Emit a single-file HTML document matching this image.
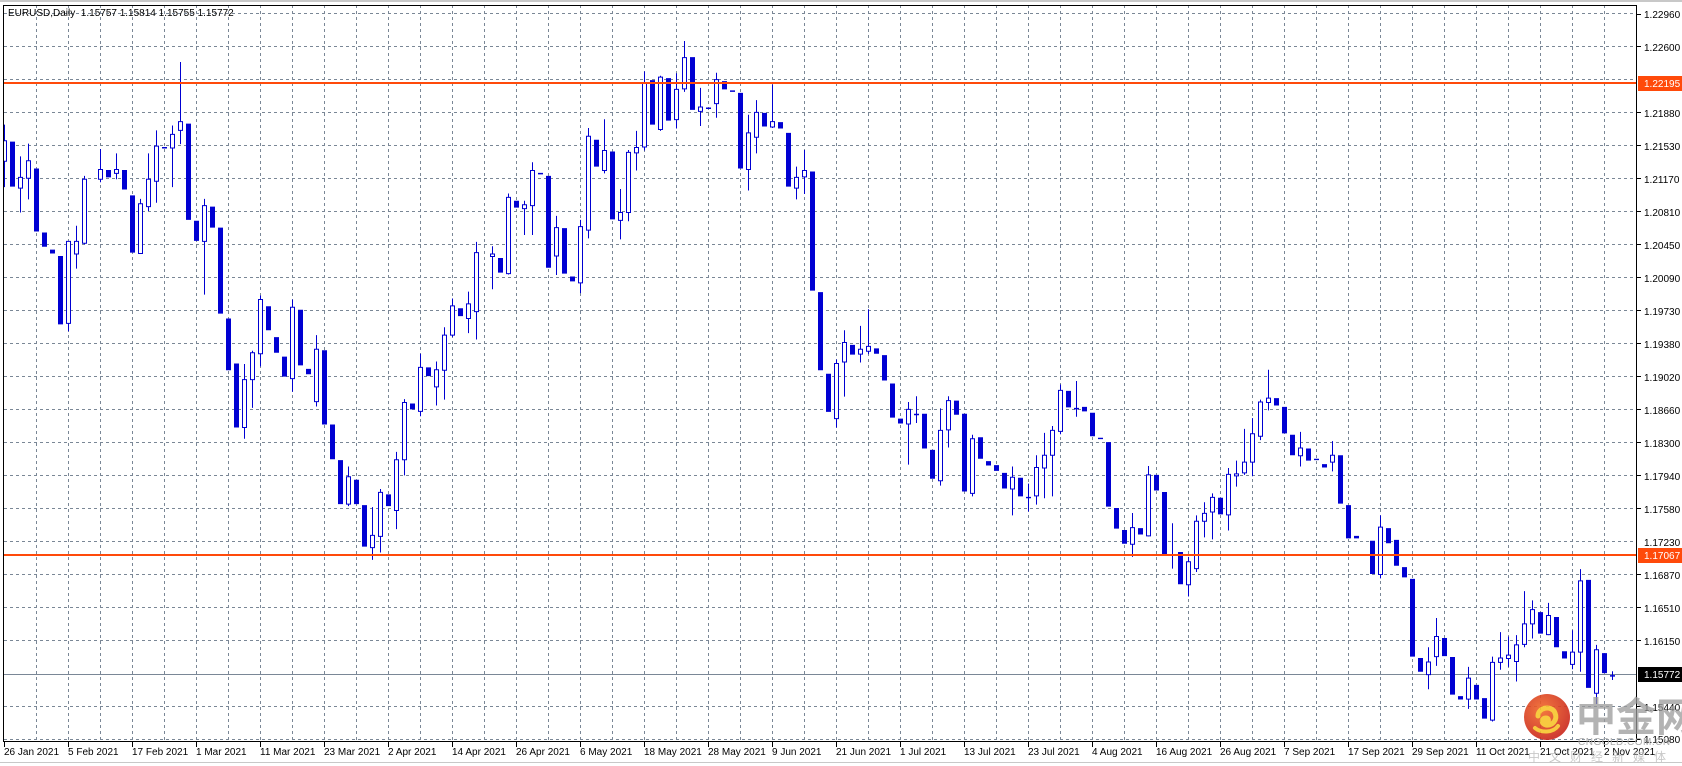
<!DOCTYPE html>
<html><head><meta charset="utf-8"><style>
html,body{margin:0;padding:0;background:#fff;}
body{width:1682px;height:766px;overflow:hidden;position:relative;}
svg{position:absolute;left:0;top:0;}
text{font-family:"Liberation Sans",Tahoma,sans-serif;font-size:10px;fill:#000;}
.wk{fill:none;stroke:#0000d2;stroke-width:1;vector-effect:non-scaling-stroke;}
.br{fill:#0000d2;}
.hl{fill:#fff;stroke:#0000d2;stroke-width:1;vector-effect:non-scaling-stroke;}
</style></head><body>
<svg width="1682" height="766" viewBox="0 0 1682 766">
<defs><clipPath id="cp"><rect x="4" y="5" width="1632" height="736"/></clipPath>
<radialGradient id="lg" cx="40%" cy="35%" r="70%"><stop offset="0" stop-color="#f26a2a"/><stop offset="1" stop-color="#c8231b"/></radialGradient></defs>
<rect x="0" y="0" width="1682" height="2" fill="#c8c8c8"/>
<path fill="none" stroke="#7a8796" stroke-width="1" stroke-dasharray="3,3" d="M36.5 5V741M68.5 5V741M100.5 5V741M132.5 5V741M164.5 5V741M196.5 5V741M228.5 5V741M260.5 5V741M292.5 5V741M324.5 5V741M356.5 5V741M388.5 5V741M420.5 5V741M452.5 5V741M484.5 5V741M516.5 5V741M548.5 5V741M580.5 5V741M612.5 5V741M644.5 5V741M676.5 5V741M708.5 5V741M740.5 5V741M772.5 5V741M804.5 5V741M836.5 5V741M868.5 5V741M900.5 5V741M932.5 5V741M964.5 5V741M996.5 5V741M1028.5 5V741M1060.5 5V741M1092.5 5V741M1124.5 5V741M1156.5 5V741M1188.5 5V741M1220.5 5V741M1252.5 5V741M1284.5 5V741M1316.5 5V741M1348.5 5V741M1380.5 5V741M1412.5 5V741M1444.5 5V741M1476.5 5V741M1508.5 5V741M1540.5 5V741M1572.5 5V741M1604.5 5V741"/>
<path fill="none" stroke="#7a8796" stroke-width="1" stroke-dasharray="3,3" d="M4 13.5H1636M4 46.5H1636M4 79.5H1636M4 112.5H1636M4 145.5H1636M4 178.5H1636M4 211.5H1636M4 244.5H1636M4 277.5H1636M4 310.5H1636M4 343.5H1636M4 376.5H1636M4 409.5H1636M4 442.5H1636M4 475.5H1636M4 508.5H1636M4 541.5H1636M4 574.5H1636M4 607.5H1636M4 640.5H1636M4 706.5H1636M4 739.5H1636"/>
<path d="M4 674.5H1636" stroke="#7a8796" stroke-width="1"/>
<g clip-path="url(#cp)"><g transform="scale(1,0.48852)">
<path class="wk" d="M4.5 255V383M20.5 320V435M28.5 294V408M68.5 494V678M76.5 462V550M84.5 360V500M100.5 305V373M116.5 314V367M140.5 407V519M148.5 314V432M156.5 267V415M172.5 257V383M180.5 127V295M204.5 407V603M244.5 745V898M252.5 718V835M260.5 605V750M292.5 613V802M316.5 686V832M348.5 955V1036M372.5 1038V1146M380.5 1001V1131M396.5 925V1083M404.5 817V973M420.5 724V852M436.5 740V830M444.5 670V818M452.5 611V690M468.5 597V682M476.5 495V695M492.5 504V592M508.5 396V562M524.5 411V481M532.5 332V481M556.5 442V563M580.5 450V600M588.5 262V488M604.5 244V355M620.5 387V490M628.5 307V453M636.5 268V349M644.5 146V308M660.5 155V268M676.5 150V263M684.5 84V188M700.5 180V258M716.5 149V241M748.5 235V390M756.5 205V314M772.5 173V262M796.5 341V408M804.5 307V397M836.5 736V875M844.5 676V812M860.5 667V742M868.5 633V725M908.5 823V951M916.5 811V866M940.5 836V994M948.5 811V916M972.5 890V1016M1012.5 955V1055M1028.5 990V1047M1036.5 932V1033M1044.5 886V1020M1052.5 872V1016M1060.5 787V889M1076.5 780V853M1132.5 1050V1140M1148.5 954V1098M1172.5 1071V1164M1188.5 1140V1221M1196.5 1055V1171M1204.5 1028V1100M1212.5 1010V1104M1228.5 958V1086M1236.5 943V996M1244.5 878V972M1252.5 856V975M1260.5 818V901M1268.5 757V840M1300.5 884V955M1332.5 903V965M1380.5 1055V1184M1428.5 1325V1411M1436.5 1265V1363M1468.5 1365V1451M1492.5 1344V1477M1500.5 1294V1371M1508.5 1303V1365M1516.5 1300V1395M1524.5 1210V1325M1532.5 1229V1307M1548.5 1234V1300M1572.5 1290V1370M1580.5 1165V1375M1596.5 1320V1441M1612.5 1374V1392"/>
<path class="br" d="M10 290h5V382h-5zM34 345h5V474h-5zM42 476h5V505h-5zM50 511h5V519h-5zM58 524h5V664h-5zM106 348h5V363h-5zM122 348h5V388h-5zM130 400h5V517h-5zM186 253h5V450h-5zM194 452h5V493h-5zM210 423h5V466h-5zM218 466h5V642h-5zM226 652h5V758h-5zM234 744h5V875h-5zM266 627h5V676h-5zM274 690h5V722h-5zM282 730h5V771h-5zM298 634h5V748h-5zM306 755h5V766h-5zM322 717h5V869h-5zM330 869h5V940h-5zM338 942h5V1032h-5zM354 982h5V1032h-5zM362 1034h5V1119h-5zM386 1012h5V1036h-5zM410 826h5V838h-5zM426 752h5V770h-5zM458 631h5V647h-5zM498 528h5V558h-5zM514 411h5V425h-5zM546 360h5V548h-5zM562 467h5V560h-5zM570 566h5V576h-5zM594 286h5V341h-5zM610 310h5V449h-5zM650 164h5V255h-5zM666 160h5V247h-5zM690 117h5V225h-5zM722 166h5V183h-5zM738 190h5V345h-5zM762 231h5V259h-5zM778 250h5V263h-5zM786 272h5V382h-5zM810 351h5V595h-5zM818 598h5V758h-5zM826 765h5V843h-5zM850 706h5V726h-5zM874 713h5V724h-5zM882 727h5V779h-5zM890 785h5V855h-5zM898 857h5V867h-5zM922 847h5V918h-5zM930 921h5V980h-5zM954 820h5V849h-5zM962 847h5V1006h-5zM978 895h5V939h-5zM986 944h5V953h-5zM994 952h5V964h-5zM1002 968h5V1000h-5zM1018 978h5V1016h-5zM1066 800h5V834h-5zM1082 833h5V842h-5zM1090 845h5V893h-5zM1106 905h5V1037h-5zM1114 1040h5V1082h-5zM1122 1085h5V1113h-5zM1138 1081h5V1094h-5zM1154 972h5V1004h-5zM1162 1007h5V1134h-5zM1178 1130h5V1196h-5zM1218 1019h5V1053h-5zM1274 815h5V830h-5zM1282 833h5V887h-5zM1290 890h5V932h-5zM1306 918h5V943h-5zM1322 950h5V957h-5zM1338 932h5V1031h-5zM1346 1034h5V1102h-5zM1354 1097h5V1102h-5zM1370 1107h5V1175h-5zM1386 1081h5V1112h-5zM1394 1105h5V1158h-5zM1402 1161h5V1182h-5zM1410 1185h5V1344h-5zM1418 1347h5V1375h-5zM1442 1306h5V1343h-5zM1450 1345h5V1422h-5zM1458 1425h5V1432h-5zM1474 1402h5V1432h-5zM1482 1429h5V1471h-5zM1538 1253h5V1297h-5zM1554 1263h5V1325h-5zM1562 1333h5V1348h-5zM1586 1187h5V1408h-5zM1602 1337h5V1378h-5zM162 301h5v3h-5zM538 354h5v3h-5zM706 220h5v3h-5zM730 185h5v3h-5zM914 847h5v3h-5zM1026 1017h5v3h-5zM1074 835h5v3h-5zM1098 896h5v3h-5zM1170 1134h5v3h-5zM1314 939h5v3h-5zM1610 1382h5v3h-5z"/>
<path class="hl" d="M2.5 288h4V330h-4zM18.5 363h4V385h-4zM26.5 329h4V365h-4zM66.5 494h4V662h-4zM74.5 494h4V520h-4zM82.5 367h4V498h-4zM98.5 347h4V367h-4zM114.5 347h4V355h-4zM138.5 417h4V519h-4zM146.5 367h4V423h-4zM154.5 299h4V371h-4zM170.5 275h4V303h-4zM178.5 249h4V267h-4zM202.5 421h4V494h-4zM242.5 777h4V875h-4zM250.5 722h4V777h-4zM258.5 613h4V724h-4zM290.5 629h4V775h-4zM314.5 715h4V822h-4zM346.5 976h4V1032h-4zM370.5 1096h4V1121h-4zM378.5 1008h4V1098h-4zM394.5 941h4V1045h-4zM402.5 824h4V941h-4zM418.5 752h4V842h-4zM434.5 757h4V792h-4zM442.5 686h4V758h-4zM450.5 626h4V686h-4zM466.5 622h4V652h-4zM474.5 517h4V638h-4zM490.5 520h4V525h-4zM506.5 404h4V560h-4zM522.5 419h4V427h-4zM530.5 349h4V421h-4zM554.5 466h4V524h-4zM578.5 464h4V579h-4zM586.5 279h4V471h-4zM602.5 308h4V349h-4zM618.5 435h4V451h-4zM626.5 312h4V435h-4zM634.5 302h4V313h-4zM642.5 169h4V301h-4zM658.5 158h4V265h-4zM674.5 183h4V245h-4zM682.5 118h4V182h-4zM698.5 219h4V228h-4zM714.5 163h4V212h-4zM746.5 272h4V347h-4zM754.5 230h4V281h-4zM770.5 249h4V260h-4zM794.5 363h4V385h-4zM802.5 349h4V362h-4zM834.5 744h4V857h-4zM842.5 701h4V741h-4zM858.5 715h4V725h-4zM866.5 709h4V719h-4zM906.5 838h4V868h-4zM938.5 881h4V984h-4zM946.5 820h4V880h-4zM970.5 898h4V1010h-4zM1010.5 977h4V1001h-4zM1034.5 957h4V1015h-4zM1042.5 932h4V958h-4zM1050.5 881h4V932h-4zM1058.5 799h4V883h-4zM1130.5 1080h4V1114h-4zM1146.5 972h4V1097h-4zM1186.5 1150h4V1197h-4zM1194.5 1067h4V1164h-4zM1202.5 1051h4V1067h-4zM1210.5 1018h4V1048h-4zM1226.5 971h4V1054h-4zM1234.5 970h4V974h-4zM1242.5 946h4V968h-4zM1250.5 888h4V946h-4zM1258.5 823h4V893h-4zM1266.5 815h4V824h-4zM1298.5 917h4V933h-4zM1330.5 932h4V946h-4zM1378.5 1079h4V1176h-4zM1426.5 1355h4V1381h-4zM1434.5 1303h4V1344h-4zM1466.5 1388h4V1431h-4zM1490.5 1356h4V1474h-4zM1498.5 1347h4V1356h-4zM1506.5 1341h4V1348h-4zM1514.5 1320h4V1354h-4zM1522.5 1277h4V1319h-4zM1530.5 1248h4V1277h-4zM1546.5 1260h4V1299h-4zM1570.5 1335h4V1360h-4zM1578.5 1189h4V1335h-4zM1594.5 1330h4V1419h-4z"/>
</g></g>
<rect x="4" y="82" width="1633" height="2" fill="#ff4a0a"/>
<rect x="4" y="554" width="1633" height="2" fill="#ff4a0a"/>
<rect x="3.5" y="5.5" width="1633" height="736" fill="none" stroke="#000" stroke-width="1"/>
<path stroke="#000" stroke-width="1" d="M1637 14.5h4M1637 46.5h4M1637 112.5h4M1637 145.5h4M1637 178.5h4M1637 211.5h4M1637 244.5h4M1637 277.5h4M1637 310.5h4M1637 343.5h4M1637 376.5h4M1637 409.5h4M1637 442.5h4M1637 475.5h4M1637 508.5h4M1637 574.5h4M1637 607.5h4M1637 640.5h4M1637 706.5h4M1637 739.5h4"/>
<g>
<text x="1644" y="18">1.22960</text>
<text x="1644" y="51">1.22600</text>
<text x="1644" y="117">1.21880</text>
<text x="1644" y="150">1.21530</text>
<text x="1644" y="183">1.21170</text>
<text x="1644" y="216">1.20810</text>
<text x="1644" y="249">1.20450</text>
<text x="1644" y="282">1.20090</text>
<text x="1644" y="315">1.19730</text>
<text x="1644" y="348">1.19380</text>
<text x="1644" y="381">1.19020</text>
<text x="1644" y="414">1.18660</text>
<text x="1644" y="447">1.18300</text>
<text x="1644" y="480">1.17940</text>
<text x="1644" y="513">1.17580</text>
<text x="1644" y="546">1.17230</text>
<text x="1644" y="579">1.16870</text>
<text x="1644" y="612">1.16510</text>
<text x="1644" y="645">1.16150</text>
<text x="1644" y="711">1.15440</text>
<text x="1644" y="743">1.15080</text>
</g>
<rect x="1638" y="76" width="44" height="15" fill="#ff4a0a"/>
<text x="1644" y="87" style="fill:#fff">1.22195</text>
<rect x="1638" y="548" width="44" height="15" fill="#ff4a0a"/>
<text x="1644" y="559" style="fill:#fff">1.17067</text>
<rect x="1638" y="667" width="44" height="15" fill="#000"/>
<text x="1644" y="678" style="fill:#fff">1.15772</text>
<path stroke="#000" stroke-width="1" d="M4.5 742v5M68.5 742v5M132.5 742v5M196.5 742v5M260.5 742v5M324.5 742v5M388.5 742v5M452.5 742v5M516.5 742v5M580.5 742v5M644.5 742v5M708.5 742v5M772.5 742v5M836.5 742v5M900.5 742v5M964.5 742v5M1028.5 742v5M1092.5 742v5M1156.5 742v5M1220.5 742v5M1284.5 742v5M1348.5 742v5M1412.5 742v5M1476.5 742v5M1540.5 742v5M1604.5 742v5"/>
<g>
<text x="4" y="755">26 Jan 2021</text>
<text x="68" y="755">5 Feb 2021</text>
<text x="132" y="755">17 Feb 2021</text>
<text x="196" y="755">1 Mar 2021</text>
<text x="260" y="755">11 Mar 2021</text>
<text x="324" y="755">23 Mar 2021</text>
<text x="388" y="755">2 Apr 2021</text>
<text x="452" y="755">14 Apr 2021</text>
<text x="516" y="755">26 Apr 2021</text>
<text x="580" y="755">6 May 2021</text>
<text x="644" y="755">18 May 2021</text>
<text x="708" y="755">28 May 2021</text>
<text x="772" y="755">9 Jun 2021</text>
<text x="836" y="755">21 Jun 2021</text>
<text x="900" y="755">1 Jul 2021</text>
<text x="964" y="755">13 Jul 2021</text>
<text x="1028" y="755">23 Jul 2021</text>
<text x="1092" y="755">4 Aug 2021</text>
<text x="1156" y="755">16 Aug 2021</text>
<text x="1220" y="755">26 Aug 2021</text>
<text x="1284" y="755">7 Sep 2021</text>
<text x="1348" y="755">17 Sep 2021</text>
<text x="1412" y="755">29 Sep 2021</text>
<text x="1476" y="755">11 Oct 2021</text>
<text x="1540" y="755">21 Oct 2021</text>
<text x="1604" y="755">2 Nov 2021</text>
</g>
<rect x="0" y="762" width="1682" height="1" fill="#c8c8c8"/>
<text x="8" y="16">EURUSD,Daily&#160;&#160;1.15757 1.15814 1.15755 1.15772</text>
<g opacity="0.9">
<circle cx="1547" cy="717" r="23" fill="url(#lg)"/>
<path d="M1538 716c0-9 14-11 17-3c3 7-3 13-9 12c-5-1-5-7 0-7c3 0 3 3 1 4" fill="none" stroke="#f7c52c" stroke-width="5" stroke-linecap="round"/>
<path d="M1535 728c6 5 18 5 23-2" fill="none" stroke="#f7c52c" stroke-width="4" stroke-linecap="round"/>
</g>
<text x="1576" y="731" style="font-family:'Noto Sans CJK SC','WenQuanYi Zen Hei',sans-serif;font-size:40px;font-weight:bold;fill:#9a9a9a;opacity:0.75">中金网</text>
<text x="1578" y="745" style="font-size:10px;fill:#aaa;letter-spacing:0.5px">CNGOLD.COM.CN</text>
<text x="1528" y="761" style="font-family:'Noto Sans CJK SC','WenQuanYi Zen Hei',sans-serif;font-size:12px;fill:#bbb;letter-spacing:9px;opacity:0.8">中文财经新媒体</text>
</svg>
</body></html>
